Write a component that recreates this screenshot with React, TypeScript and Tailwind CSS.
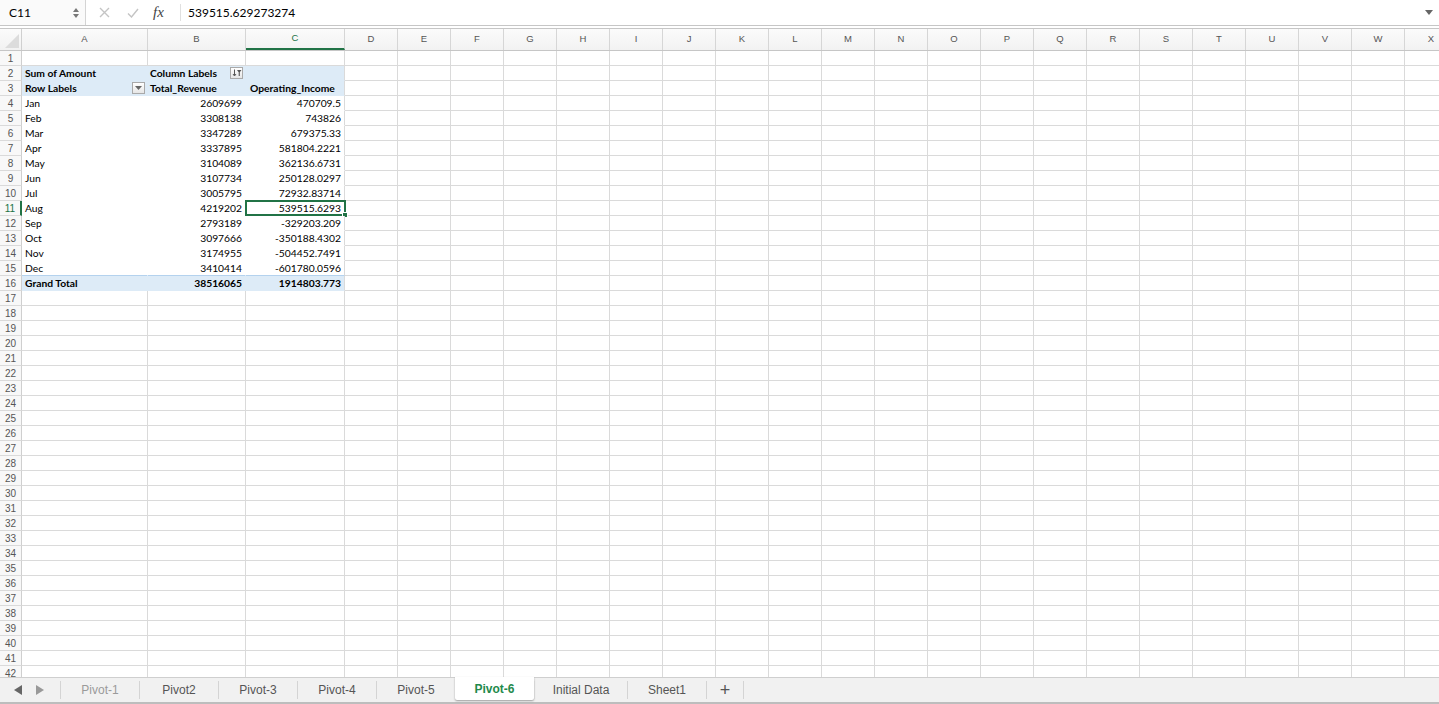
import React from 'react';

const rows = [
  ['Jan', '2609699', '470709.5'],
  ['Feb', '3308138', '743826'],
  ['Mar', '3347289', '679375.33'],
  ['Apr', '3337895', '581804.2221'],
  ['May', '3104089', '362136.6731'],
  ['Jun', '3107734', '250128.0297'],
  ['Jul', '3005795', '72932.83714'],
  ['Aug', '4219202', '539515.6293'],
  ['Sep', '2793189', '-329203.209'],
  ['Oct', '3097666', '-350188.4302'],
  ['Nov', '3174955', '-504452.7491'],
  ['Dec', '3410414', '-601780.0596'],
];

const extraCols = ['D', 'E', 'F', 'G', 'H', 'I', 'J', 'K', 'L', 'M', 'N', 'O', 'P', 'Q', 'R', 'S', 'T', 'U', 'V', 'W', 'X'];
const tabs = ['Pivot-1', 'Pivot2', 'Pivot-3', 'Pivot-4', 'Pivot-5', 'Pivot-6', 'Initial Data', 'Sheet1'];

const cellFont = { fontFamily: 'Lato, "Liberation Sans", sans-serif' };

function FilterButton() {
  return (
    <div className="absolute right-[2px] top-[1px] w-[13px] h-[12px] border border-[#a9a9a9] bg-gradient-to-b from-white to-[#e6e6e6] flex items-center justify-center">
      <svg width="7" height="4" viewBox="0 0 7 4">
        <path d="M0 0 L7 0 L3.5 4 Z" fill="#666" />
      </svg>
    </div>
  );
}

function SortFilterButton() {
  return (
    <div className="absolute right-[2px] top-[1px] w-[13px] h-[12px] border border-[#a9a9a9] bg-gradient-to-b from-white to-[#e6e6e6] flex items-center justify-center">
      <svg width="10" height="8" viewBox="0 0 10 8">
        <path d="M2.5 0.5 V6.5 M1 5 L2.5 7 L4 5" stroke="#555" strokeWidth="1" fill="none" />
        <path d="M5 1 H9.5 L7.8 3.2 V7 H6.7 V3.2 Z" fill="#555" />
      </svg>
    </div>
  );
}

function GridRow({ n, a, b, c, kind, selected }: { n: number; a?: React.ReactNode; b?: React.ReactNode; c?: React.ReactNode; kind: 'plain' | 'head' | 'body' | 'lastBody' | 'total'; selected?: boolean }) {
  const pivot = kind !== 'plain';
  const blue = kind === 'head' || kind === 'total';
  const bg = blue ? 'bg-[#ddebf7]' : 'bg-white';
  let bottom = 'border-b-[#dadada]';
  if (kind === 'head') bottom = 'border-b-[#ddebf7]';
  if (kind === 'body') bottom = 'border-b-white';
  if (kind === 'lastBody') bottom = 'border-b-[#b4d2ee]';
  if (kind === 'total') bottom = 'border-b-[#ddebf7]';
  const rightAB = pivot ? (blue ? 'border-r-[#ddebf7]' : 'border-r-white') : 'border-r-[#dadada]';
  const weight = blue ? 'font-bold' : '';
  return (
    <div className="flex h-[15px] shrink-0">
      <div
        className={`w-[22px] shrink-0 h-full box-border border-b border-b-[#dadada] flex items-center justify-center text-[10px] bg-[#f8f8f8] ${
          selected ? 'border-r-2 border-r-[#217346] text-[#217346]' : 'border-r border-r-[#cfcfcf] text-[#555]'
        }`}
        style={{ fontFamily: '"Liberation Sans", sans-serif' }}
      >
        {n}
      </div>
      <div className={`relative w-[126px] shrink-0 h-full box-border border-r border-b ${rightAB} ${bottom} ${bg} ${weight} flex items-center pl-[3px] text-[10.3px] text-black leading-none`} style={cellFont}>
        {a}
      </div>
      <div className={`relative w-[98px] shrink-0 h-full box-border border-r border-b ${rightAB} ${bottom} ${bg} ${weight} flex items-center ${kind === 'head' ? 'justify-start pl-[2px]' : 'justify-end pr-[3px]'} text-[10.3px] text-black leading-none`} style={cellFont}>
        {b}
      </div>
      <div className={`relative w-[99px] shrink-0 h-full box-border border-r border-b border-r-[#dadada] ${bottom} ${bg} ${weight} flex items-center ${kind === 'head' ? 'justify-start pl-[4px]' : 'justify-end pr-[3px]'} text-[10.3px] text-black leading-none`} style={cellFont}>
        {c}
        {selected && (
          <div className="absolute -left-[1px] -top-[1px] w-[101px] h-[16px] border-2 border-[#217346]">
            <div className="absolute -right-[4px] -bottom-[4px] w-[6px] h-[6px] bg-[#217346] border border-white" />
          </div>
        )}
      </div>
      {extraCols.map((col) => (
        <div key={col} className="w-[53px] shrink-0 h-full box-border border-r border-b border-r-[#dadada] border-b-[#dadada]" />
      ))}
    </div>
  );
}

export default function App() {
  const allRows: React.ReactNode[] = [];
  allRows.push(<GridRow key={1} n={1} kind="plain" />);
  allRows.push(
    <GridRow
      key={2}
      n={2}
      kind="head"
      a="Sum of Amount"
      b={
        <>
          Column Labels
          <SortFilterButton />
        </>
      }
    />
  );
  allRows.push(
    <GridRow
      key={3}
      n={3}
      kind="head"
      a={
        <>
          Row Labels
          <FilterButton />
        </>
      }
      b="Total_Revenue"
      c="Operating_Income"
    />
  );
  rows.forEach((r, i) => {
    allRows.push(
      <GridRow key={4 + i} n={4 + i} kind={i === rows.length - 1 ? 'lastBody' : 'body'} a={r[0]} b={r[1]} c={r[2]} selected={r[0] === 'Aug'} />
    );
  });
  allRows.push(<GridRow key={16} n={16} kind="total" a="Grand Total" b="38516065" c="1914803.773" />);
  for (let n = 17; n <= 43; n++) allRows.push(<GridRow key={n} n={n} kind="plain" />);

  return (
    <div className="w-[1439px] h-[704px] flex flex-col overflow-hidden bg-white" style={{ fontFamily: '"Liberation Sans", Arial, sans-serif' }}>
      {/* formula bar */}
      <div className="h-[26px] shrink-0 flex items-stretch border-b border-[#c6c6c6] bg-white">
        <div className="w-[86px] shrink-0 flex items-center justify-between pl-[9px] pr-[6px] bg-[#fafafa] border-r border-[#d4d4d4]">
          <span className="text-[12px] text-black" style={cellFont}>C11</span>
          <div className="flex flex-col items-center gap-[2px]">
            <svg width="6" height="4" viewBox="0 0 6 4"><path d="M0 4 L3 0 L6 4 Z" fill="#777" /></svg>
            <svg width="6" height="4" viewBox="0 0 6 4"><path d="M0 0 L6 0 L3 4 Z" fill="#777" /></svg>
          </div>
        </div>
        <div className="w-[95px] shrink-0 flex items-center border-r border-[#e0e0e0] my-[4px]">
          <svg className="ml-[13px]" width="11" height="11" viewBox="0 0 11 11">
            <path d="M1 1 L10 10 M10 1 L1 10" stroke="#c4c4c4" strokeWidth="1.4" />
          </svg>
          <svg className="ml-[17px]" width="12" height="10" viewBox="0 0 12 10">
            <path d="M1 5.5 L4.5 9 L11 1" stroke="#c4c4c4" strokeWidth="1.4" fill="none" />
          </svg>
          <span className="ml-[14px] text-[15px] italic text-[#444]" style={{ fontFamily: '"Liberation Serif", serif' }}>fx</span>
        </div>
        <div className="flex-1 flex items-center pl-[7px] text-[12px] text-black" style={cellFont}>
          539515.629273274
        </div>
        <div className="w-[20px] flex items-center justify-center">
          <svg width="8" height="5" viewBox="0 0 8 5"><path d="M0 0 L8 0 L4 5 Z" fill="#666" /></svg>
        </div>
      </div>
      <div className="h-[2px] shrink-0 bg-white" />
      {/* column headers */}
      <div className="h-[23px] shrink-0 flex border-t border-b border-[#c6c6c6] bg-gradient-to-b from-[#fbfbfb] to-[#f2f2f2] text-[9.5px] text-[#555]">
        <div className="w-[22px] shrink-0 h-full border-r border-[#d0d0d0] relative">
          <svg className="absolute right-[2px] bottom-[2px]" width="14" height="14" viewBox="0 0 14 14">
            <path d="M14 0 L14 14 L0 14 Z" fill="#dcdcdc" />
          </svg>
        </div>
        <div className="w-[126px] shrink-0 h-full border-r border-[#d6d6d6] flex items-center justify-center">A</div>
        <div className="w-[98px] shrink-0 h-full border-r border-[#d6d6d6] flex items-center justify-center">B</div>
        <div className="w-[99px] shrink-0 h-full border-r border-[#d6d6d6] flex items-center justify-center text-[#217346] border-b-2 border-b-[#217346] box-border">C</div>
        {extraCols.map((col) => (
          <div key={col} className="w-[53px] shrink-0 h-full border-r border-[#d6d6d6] flex items-center justify-center">
            {col}
          </div>
        ))}
      </div>
      {/* grid */}
      <div className="flex-1 overflow-hidden flex flex-col">{allRows}</div>
      {/* sheet tabs */}
      <div className="h-[27px] shrink-0 flex items-stretch bg-[#f1f1f1] border-t border-[#cfcfcf] border-b-2 border-b-[#bdbdbd] text-[12px] text-[#555]">
        <div className="w-[60px] shrink-0 flex items-center pl-[14px] gap-[14px]">
          <svg width="8" height="10" viewBox="0 0 8 10"><path d="M8 0 L8 10 L0 5 Z" fill="#666" /></svg>
          <svg width="8" height="10" viewBox="0 0 8 10"><path d="M0 0 L0 10 L8 5 Z" fill="#999" /></svg>
        </div>
        {tabs.map((t) => {
          const active = t === 'Pivot-6';
          const w = t === 'Initial Data' ? 'w-[93px]' : 'w-[79px]';
          if (active) {
            return (
              <div key={t} className={`${w} shrink-0 flex items-center justify-center bg-white -mt-[1px] mb-[2px] rounded-b-[2px] shadow-[0_1px_2px_rgba(0,0,0,0.35)] font-bold text-[#1f8a4c]`}>
                {t}
              </div>
            );
          }
          return (
            <div key={t} className={`${w} shrink-0 flex items-center justify-center my-[3px] border-l border-[#d4d4d4] ${t === 'Pivot-1' ? 'text-[#9a9a9a]' : ''}`}>
              {t}
            </div>
          );
        })}
        <div className="w-[38px] shrink-0 flex items-center justify-center my-[3px] border-l border-r border-[#d4d4d4] text-[18px] text-[#555]">
          +
        </div>
      </div>
    </div>
  );
}
